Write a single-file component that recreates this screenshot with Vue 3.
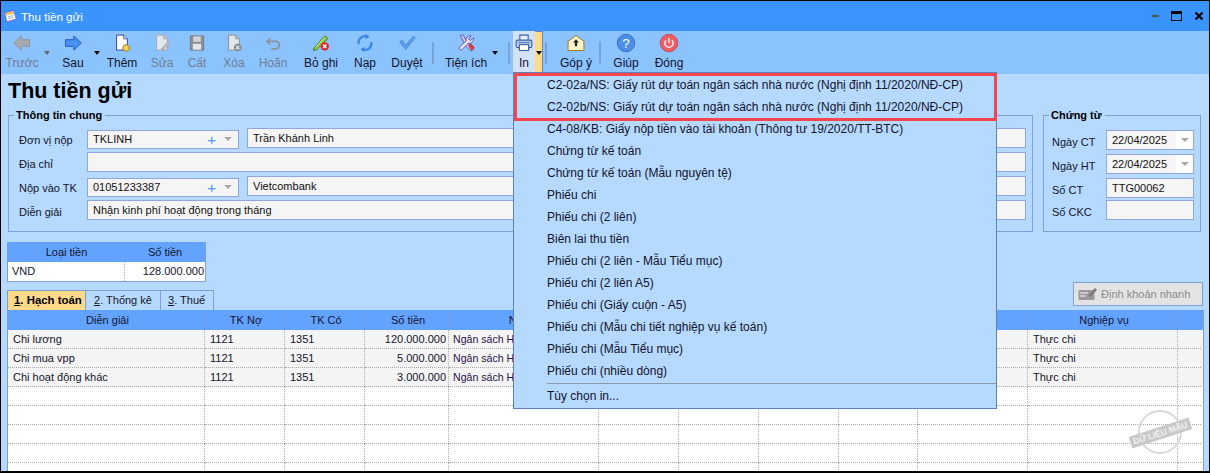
<template>
  <div class="window">
    <!-- title bar -->
    <div class="titlebar">
      <svg class="app-icon" viewBox="0 0 16 16">
        <path d="M1 4 L11 1 L15 11 L4 15 Z" fill="#7b6fd0" />
        <path d="M2.5 4.5 L11 2.5 L13.5 10.5 L4.5 13 Z" fill="#fff" />
        <path d="M2.5 4.5 L11 2.5 L11.6 5 L3.2 7 Z" fill="#f2c14e" />
        <path d="M5 8.5 L11 7 M5.5 10.5 L11.5 9" stroke="#9ab" stroke-width="1" />
      </svg>
      <span class="title-text">Thu tiền gửi</span>
      <div class="win-btns">
        <span class="btn-min"></span>
        <span class="btn-max"></span>
        <svg class="btn-close" viewBox="0 0 10 10"><path d="M1.5 1.5 L8.5 8.5 M8.5 1.5 L1.5 8.5" stroke="#000" stroke-width="2.2" /></svg>
      </div>
    </div>

    <!-- toolbar -->
    <div class="toolbar">
      <template v-for="item in toolbar" :key="item.label">
        <div v-if="item.sep" class="tb-sep" :style="{ marginLeft: item.ml + 'px' }"></div>
        <div v-else class="tb-item" :class="{ disabled: item.disabled, active: item.active }" :style="{ width: item.w + 'px', marginLeft: item.ml + 'px' }">
          <svg class="tb-icon" viewBox="0 0 24 24" v-html="icons[item.icon]"></svg>
          <span class="tb-label">{{ item.label }}</span>
          <span v-if="item.arrow" class="tb-arrow"></span>
        </div>
      </template>
    </div>

    <div class="main">
      <h1 class="page-title">Thu tiền gửi</h1>

      <div class="groups">
        <fieldset class="group info">
          <legend>Thông tin chung</legend>
          <div class="form-row">
            <label>Đơn vị nộp</label>
            <div class="input combo"><span>TKLINH</span><i class="plus">+</i><i class="caret"></i></div>
            <div class="input wide">Trần Khánh Linh</div>
          </div>
          <div class="form-row">
            <label>Địa chỉ</label>
            <div class="input wide"></div>
          </div>
          <div class="form-row">
            <label>Nộp vào TK</label>
            <div class="input combo"><span>01051233387</span><i class="plus">+</i><i class="caret"></i></div>
            <div class="input wide">Vietcombank</div>
          </div>
          <div class="form-row">
            <label>Diễn giải</label>
            <div class="input wide">Nhận kinh phí hoạt động trong tháng</div>
          </div>
        </fieldset>

        <fieldset class="group voucher">
          <legend>Chứng từ</legend>
          <div class="form-row">
            <label>Ngày CT</label>
            <div class="input date"><span>22/04/2025</span><b><i class="caret"></i></b></div>
          </div>
          <div class="form-row">
            <label>Ngày HT</label>
            <div class="input date"><span>22/04/2025</span><b><i class="caret"></i></b></div>
          </div>
          <div class="form-row">
            <label>Số CT</label>
            <div class="input short">TTG00062</div>
          </div>
          <div class="form-row tight">
            <label>Số CKC</label>
            <div class="input short"></div>
          </div>
        </fieldset>
      </div>

      <div class="currency">
        <div class="cur-head"><span>Loại tiền</span><span>Số tiền</span></div>
        <div class="cur-row"><span>VND</span><span class="num">128.000.000</span></div>
      </div>

      <div class="tab-line">
        <div class="tabs">
          <div class="tab on"><u>1</u>. Hạch toán</div>
          <div class="tab t2"><u>2</u>. Thống kê</div>
          <div class="tab t3"><u>3</u>. Thuế</div>
        </div>
        <div class="quick-btn">
          <svg viewBox="0 0 20 16" width="20" height="16">
            <rect x="0.5" y="4" width="16" height="10" rx="1" fill="#9a9a9a" />
            <path d="M2 7 H10 M2 10 H8" stroke="#d8d8d8" stroke-width="1.4" />
            <path d="M10 10 L17 2 L19 4 L12 11 Z" fill="#777" />
          </svg>
          <span>Định khoản nhanh</span>
        </div>
      </div>

      <div class="grid">
        <div class="g-row g-head">
          <span v-for="(h, i) in headers" :key="i">{{ h }}</span>
        </div>
        <div v-for="(r, i) in rows" :key="i" class="g-row" :class="{ filled: r.text }">
          <span>{{ r.text }}</span>
          <span>{{ r.no }}</span>
          <span>{{ r.co }}</span>
          <span class="num">{{ r.amount }}</span>
          <span class="source">{{ r.source }}</span>
          <span></span><span></span><span></span><span></span><span></span>
          <span>{{ r.kind }}</span>
          <span></span>
        </div>
      </div>
    </div>

    <!-- print dropdown -->
    <div class="menu">
      <div v-for="m in printItems" :key="m" class="menu-item">{{ m }}</div>
      <div class="menu-sep"></div>
      <div class="menu-item last">Tùy chọn in...</div>
      <div class="highlight"></div>
    </div>

    <!-- sample stamp -->
    <div class="stamp">
      <span class="ring"></span>
      <span class="stamp-text">DỮ LIỆU MẪU</span>
    </div>
  </div>
</template>

<script setup>
const icons = {
  back: '<path d="M2 12 L11 3.5 V8 H21 V16 H11 V20.5 Z" fill="#a9a9a9" stroke="#8a8a8a" stroke-width="1"/>',
  next: '<path d="M22 12 L13 3.5 V8 H3 V16 H13 V20.5 Z" fill="#4a90f0" stroke="#1f5fc8" stroke-width="1.2"/>',
  add: '<path d="M5.5 2.5 H14 L18.5 7 V20.5 H5.5 Z" fill="#fff" stroke="#3c4a9c" stroke-width="1.2"/><path d="M14 2.5 V7 H18.5" fill="#cdd6f0" stroke="#3c4a9c"/><circle cx="17" cy="18" r="4" fill="#f5cf5a" stroke="#9a7c20" stroke-width="1.2"/>',
  edit: '<path d="M5.5 2.5 H14 L18.5 7 V20.5 H5.5 Z" fill="#ececec" stroke="#a4a4a4" stroke-width="1.2"/><path d="M14 2.5 V7 H18.5" fill="#ccc" stroke="#a4a4a4"/><path d="M12 18 L20 10 L22 12 L14 20 L11.5 20.5 Z" fill="#c4c4c4" stroke="#999"/>',
  save: '<path d="M4 3.5 H20 V20.5 H4 Z" fill="#8c8c8c" stroke="#6c6c6c"/><rect x="7.5" y="4" width="9" height="6.5" fill="#d8d8d8"/><rect x="7" y="13" width="10" height="7" fill="#e9e9e9"/>',
  del: '<path d="M5.5 2.5 H14 L18.5 7 V20.5 H5.5 Z" fill="#ececec" stroke="#8c8c8c" stroke-width="1.2"/><path d="M14 2.5 V7 H18.5" fill="#bbb" stroke="#8c8c8c"/><circle cx="16.5" cy="17.5" r="4.6" fill="#8a8a8a"/><path d="M14.5 15.5 L18.5 19.5 M18.5 15.5 L14.5 19.5" stroke="#eee" stroke-width="1.3"/>',
  undo: '<path d="M9 6 L4.5 10 L9 14 M5 10 H15 C21 10 21 19 15 19 H10" fill="none" stroke="#8e8e8e" stroke-width="2"/>',
  skip: '<path d="M3 19 L15 5 C17 2.5 21 5 19 8 L7 20 L3 21 Z" fill="#8cc63f" stroke="#3f7d1c" stroke-width="1.1"/><path d="M6 17 L16 6" stroke="#d6efa6" stroke-width="1.2"/><circle cx="16.5" cy="16" r="5" fill="#e5202b"/><path d="M14.4 13.9 L18.6 18.1 M18.6 13.9 L14.4 18.1" stroke="#fff" stroke-width="1.7"/>',
  reload: '<path d="M4.5 13 C3.5 7 8.5 2.5 14 4" fill="none" stroke="#3b86e6" stroke-width="2.8"/><path d="M13 1 L17.5 4.5 L12.5 7.5 Z" fill="#3b86e6"/><path d="M19.5 11 C20.5 17 15.5 21.5 10 20" fill="none" stroke="#3b86e6" stroke-width="2.8"/><path d="M11 23 L6.5 19.5 L11.5 16.5 Z" fill="#3b86e6"/>',
  check: '<path d="M3 11 L6 8.5 L10.5 14 L20 3.5 L22 5.5 L10.5 20 Z" fill="#5a9be8" stroke="#3f7fd0" stroke-width="0.6"/>',
  tools: '<path d="M5 3 L8 2 L15 13 L20 20 L18 22 L12 16 Z" fill="#c9c4ee" stroke="#5a4fa0"/><path d="M21 6 L17.5 9 L15 7 L18 3.5 C14 2.5 11.5 6 12.5 9 L3.5 18 L6 21 L15 12 C18.5 13 22 10 21 6 Z" fill="#e8e4fa" stroke="#5a4fa0" stroke-width="1.1"/><path d="M15 15 L18 13 L22 18 L19 21 Z" fill="#e5404a" stroke="#a02028" stroke-width=".8"/>',
  print: '<path d="M7 9 V2.5 H17 V9" fill="#e9f0fb" stroke="#3d5fa8" stroke-width="1.3"/><rect x="2.5" y="8.5" width="19" height="9" rx="2" fill="#b9cdec" stroke="#3d5fa8" stroke-width="1.3"/><rect x="6.5" y="14" width="11" height="7" fill="#fff" stroke="#3d5fa8" stroke-width="1.3"/><path d="M5 11.5 H19" stroke="#3d5fa8"/>',
  feedback: '<path d="M2.5 10 L12 3 L21.5 10 V21 H2.5 Z" fill="#fdf3c8" stroke="#9a7c2a" stroke-width="1.2"/><path d="M12 7.5 L15.5 11.5 H13.3 V16 H10.7 V11.5 H8.5 Z" fill="#222"/>',
  help: '<circle cx="12" cy="12" r="10.5" fill="#4d8fe6" stroke="#2c68bd"/><text x="12" y="17.5" text-anchor="middle" font-family="Liberation Sans, sans-serif" font-size="16" fill="#fff">?</text>',
  close: '<circle cx="12" cy="12" r="10.5" fill="#ee5f67" stroke="#c33c44"/><path d="M8.5 8.7 A5 5 0 1 0 15.5 8.7" fill="none" stroke="#fff" stroke-width="1.5"/><path d="M12 6 V12" stroke="#fff" stroke-width="1.5"/>'
}

const toolbar = [
  { label: 'Trước', icon: 'back', w: 40, ml: 1, disabled: true, arrow: true },
  { label: 'Sau', icon: 'next', w: 38, ml: 12, arrow: true },
  { label: 'Thêm', icon: 'add', w: 38, ml: 11 },
  { label: 'Sửa', icon: 'edit', w: 34, ml: 4, disabled: true },
  { label: 'Cất', icon: 'save', w: 32, ml: 2, disabled: true },
  { label: 'Xóa', icon: 'del', w: 34, ml: 4, disabled: true },
  { label: 'Hoãn', icon: 'undo', w: 38, ml: 3, disabled: true },
  { label: 'Bỏ ghi', icon: 'skip', w: 44, ml: 7 },
  { label: 'Nạp', icon: 'reload', w: 32, ml: 6 },
  { label: 'Duyệt', icon: 'check', w: 40, ml: 6 },
  { sep: true, label: 's1', ml: 5 },
  { label: 'Tiện ích', icon: 'tools', w: 48, ml: 8, arrow: true },
  { sep: true, label: 's2', ml: 18 },
  { label: 'In', icon: 'print', w: 22, ml: 3, active: true, arrow: true },
  { sep: true, label: 's3', ml: 2 },
  { label: 'Góp ý', icon: 'feedback', w: 40, ml: 9 },
  { sep: true, label: 's4', ml: 3 },
  { label: 'Giúp', icon: 'help', w: 36, ml: 7 },
  { label: 'Đóng', icon: 'close', w: 40, ml: 5 }
]

const printItems = [
  'C2-02a/NS: Giấy rút dự toán ngân sách nhà nước (Nghị định 11/2020/NĐ-CP)',
  'C2-02b/NS: Giấy rút dự toán ngân sách nhà nước (Nghị định 11/2020/NĐ-CP)',
  'C4-08/KB: Giấy nộp tiền vào tài khoản (Thông tư 19/2020/TT-BTC)',
  'Chứng từ kế toán',
  'Chứng từ kế toán (Mẫu nguyên tệ)',
  'Phiếu chi',
  'Phiếu chi (2 liên)',
  'Biên lai thu tiền',
  'Phiếu chi (2 liên - Mẫu Tiểu mục)',
  'Phiếu chi (2 liên A5)',
  'Phiếu chi (Giấy cuộn - A5)',
  'Phiếu chi (Mẫu chi tiết nghiệp vụ kế toán)',
  'Phiếu chi (Mẫu Tiểu mục)',
  'Phiếu chi (nhiều dòng)'
]

const headers = ['Diễn giải', 'TK Nợ', 'TK Có', 'Số tiền', 'Nguồn', '', '', '', '', '', 'Nghiệp vụ', '']

const filled = [
  { text: 'Chi lương', no: '1121', co: '1351', amount: '120.000.000', source: 'Ngân sách H', kind: 'Thực chi' },
  { text: 'Chi mua vpp', no: '1121', co: '1351', amount: '5.000.000', source: 'Ngân sách H', kind: 'Thực chi' },
  { text: 'Chi hoạt động khác', no: '1121', co: '1351', amount: '3.000.000', source: 'Ngân sách H', kind: 'Thực chi' }
]
const rows = [...filled, ...Array.from({ length: 5 }, () => ({}))]
</script>

<style>
html, body {
  margin: 0;
  overflow: hidden;
}
</style>

<style scoped>
.window {
  position: relative;
  width: 1210px;
  height: 473px;
  box-sizing: border-box;
  border: 1px solid #000;
  border-bottom-width: 2px;
  background: #b5d9ff;
  overflow: hidden;
  font-family: "Liberation Sans", Arial, sans-serif;
  font-size: 11px;
  color: #14142a;
}

.titlebar {
  display: flex;
  align-items: center;
  height: 30px;
  padding-left: 2px;
  background: #3994ff;
  color: #fff;
}
.app-icon {
  width: 15px;
  height: 15px;
  margin-right: 3px;
}
.title-text {
  font-size: 11.6px;
}
.win-btns {
  margin-left: auto;
  display: flex;
  align-items: center;
  gap: 12px;
  padding-right: 5px;
}
.btn-min {
  width: 7px;
  height: 2px;
  background: #555;
}
.btn-max {
  width: 9px;
  height: 6px;
  border: 1px solid #000;
  border-top-width: 3px;
}
.btn-close {
  width: 10px;
  height: 10px;
}

.toolbar {
  display: flex;
  height: 43px;
  background: #8bc3ff;
}
.tb-item {
  position: relative;
  display: flex;
  flex-direction: column;
  align-items: center;
  flex: none;
  box-sizing: border-box;
  padding-top: 2px;
  height: 43px;
}
.tb-item.disabled .tb-label {
  color: #6f7f92;
}
.tb-item.disabled .tb-icon {
  opacity: 0.9;
}
.tb-icon {
  width: 20px;
  height: 20px;
  margin-bottom: 3px;
}
.tb-label {
  font-size: 12px;
  line-height: 15px;
  white-space: nowrap;
}
.tb-arrow {
  position: absolute;
  right: -8px;
  top: 20px;
  border: 3px solid transparent;
  border-top: 4px solid #111;
  border-bottom: 0;
}
.tb-item.disabled .tb-arrow {
  border-top-color: #666;
}
.tb-item.active {
  background: #d3e3f7;
  margin-right: 8px;
}
.tb-item.active::after {
  content: "";
  position: absolute;
  left: 22px;
  top: 0;
  width: 8px;
  height: 43px;
  box-sizing: border-box;
  background: #ffd98a;
  border: 1px solid #6d86b8;
  border-width: 1px 1px 0 0;
}
.tb-item.active .tb-arrow {
  right: -7px;
  z-index: 1;
}
.tb-sep {
  flex: none;
  width: 2px;
  height: 22px;
  margin-top: 11px;
  background: #7ba4d6;
}

.main {
  padding: 0 6px;
}
.page-title {
  margin: 0;
  height: 30px;
  padding-top: 4px;
  font-size: 21.5px;
  line-height: 26px;
  font-weight: 700;
  color: #000;
  padding-left: 1px;
}

.groups {
  display: flex;
  gap: 10px;
}
.group {
  margin: 0;
  min-width: 0;
  box-sizing: border-box;
  height: 124px;
  padding: 6px 6px 0 10px;
  border: 1px solid #7f9fd8;
}
.group legend {
  padding: 0 3px 0 2px;
  margin-left: -5px;
  font-size: 11px;
  line-height: 14px;
  font-weight: 700;
  color: #000;
}
.info {
  width: 1025px;
  margin-left: 1px;
}
.voucher {
  width: 158px;
  padding: 8px 6px 0 8px;
}
.voucher legend {
  margin-left: -3px;
}
.form-row {
  display: flex;
  align-items: center;
  gap: 8px;
  height: 20px;
  margin-bottom: 4px;
}
.form-row.tight {
  margin-top: -2px;
}
.form-row label {
  flex: none;
  width: 60px;
  padding-top: 3px;
  white-space: nowrap;
}
.voucher .form-row label {
  width: 46px;
}
.input {
  display: flex;
  align-items: center;
  box-sizing: border-box;
  height: 20px;
  padding-left: 5px;
  border: 1px solid #8fa6e0;
  background: #f5f5f5;
  white-space: nowrap;
  color: #111;
}
.wide {
  flex: 1;
  min-width: 0;
}
.combo {
  flex: none;
  width: 152px;
  margin-top: 2px;
  height: 19px;
}
.combo span {
  flex: 1;
}
.plus {
  font-style: normal;
  font-size: 15px;
  color: #4f9ae8;
  margin-right: 8px;
}
.caret {
  display: block;
  width: 0;
  height: 0;
  margin-right: 6px;
  border: 4px solid transparent;
  border-top: 4px solid #a6a6a6;
  border-bottom: 0;
}
.date,
.short {
  flex: none;
  width: 88px;
}
.date {
  padding-right: 0;
}
.date span {
  flex: 1;
}
.date b {
  display: flex;
  align-items: center;
  justify-content: center;
  align-self: stretch;
  width: 17px;
  background: #fff;
}
.date .caret {
  margin: 0;
}

.currency {
  width: 197px;
  margin-top: 10px;
  border: 1px solid #7f9fd8;
  border-top: 0;
  box-sizing: content-box;
}
.cur-head,
.cur-row {
  display: grid;
  grid-template-columns: 117px 80px;
}
.cur-head {
  height: 20px;
  line-height: 20px;
  background: #62a3ff;
  text-align: center;
}
.cur-row {
  height: 19px;
  line-height: 18px;
  background: #fff;
}
.cur-row span {
  padding: 0 1px 0 4px;
  border-right: 1px dotted #aaa;
}
.cur-row span:last-child {
  border-right: 0;
}
.num {
  text-align: right;
}

.tab-line {
  display: flex;
  justify-content: space-between;
  align-items: flex-end;
  height: 28px;
  margin-left: 0;
}
.tabs {
  display: flex;
  height: 20px;
}
.tab {
  box-sizing: border-box;
  height: 20px;
  line-height: 19px;
  padding-left: 6px;
  border: 1px solid #7f9fd8;
  border-bottom: 0;
  border-left: 0;
}
.tab.on {
  width: 79px;
  background: #ffd98a;
  font-size: 11.4px;
  font-weight: 700;
  color: #000;
  border-left: 1px solid #7f9fd8;
}
.t2 {
  width: 75px;
  padding-left: 8px;
}
.t3 {
  width: 53px;
  padding-left: 7px;
}
.quick-btn {
  display: flex;
  align-items: center;
  gap: 3px;
  box-sizing: border-box;
  width: 130px;
  height: 24px;
  margin: 0 0 4px;
  padding-left: 4px;
  background: #e3e3e3;
  border: 1px solid #7fa2d8;
  color: #8a8a8a;
}

.grid {
  width: 1195px;
  border-left: 1px solid #7f9fd8;
  border-right: 1px solid #7f9fd8;
  background: #fff;
}
.g-row {
  display: grid;
  grid-template-columns: 197px 80px 80px 84px 150px 80px 80px 80px 79px 110px 150px 23px;
  height: 19px;
}
.g-row span {
  box-sizing: border-box;
  height: 19px;
  line-height: 18px;
  padding: 0 2px 0 5px;
  border-right: 1px dotted #aaa;
  border-bottom: 1px dotted #aaa;
  white-space: nowrap;
  overflow: hidden;
}
.g-row span:last-child {
  border-right: 0;
}
.g-row.filled {
  background: #f4f4f4;
}
.g-row .num {
  text-align: right;
}
.g-row .source {
  color: #2a1248;
  padding-left: 4px;
  font-size: 10.6px;
}
.g-head {
  height: 20px;
  background: #62a3ff;
}
.g-head span {
  height: 20px;
  line-height: 20px;
  text-align: center;
  border-right: 1px solid #6e9fe6;
  border-bottom: 0;
}

.menu {
  position: absolute;
  left: 512px;
  top: 71px;
  width: 484px;
  height: 337px;
  box-sizing: border-box;
  padding-top: 1px;
  font-size: 12px;
  background: #b5d9ff;
  border: 1px solid #5f7fb8;
}
.menu-item {
  height: 22px;
  line-height: 22px;
  padding-left: 33px;
  white-space: nowrap;
}
.menu-sep {
  height: 1px;
  margin: 1px 0 0 33px;
  background: #8a9bb0;
}
.menu-item.last {
  margin-top: 1px;
}
.highlight {
  position: absolute;
  left: 0;
  top: 0;
  width: 483px;
  height: 48px;
  box-sizing: border-box;
  border: 3px solid #f4444f;
}

.stamp {
  position: absolute;
  left: 1128px;
  top: 409px;
  width: 62px;
  height: 46px;
  display: flex;
  align-items: center;
  justify-content: center;
}
.ring {
  position: absolute;
  left: 9px;
  top: 0;
  width: 40px;
  height: 40px;
  border: 2px solid #d8d8d8;
  border-radius: 50%;
}
.stamp-text {
  position: relative;
  padding: 1px 3px;
  background: #c8c8c8;
  color: #f2f2f2;
  font-size: 8.5px;
  font-weight: 700;
  white-space: nowrap;
  transform: rotate(-18deg);
}
</style>
